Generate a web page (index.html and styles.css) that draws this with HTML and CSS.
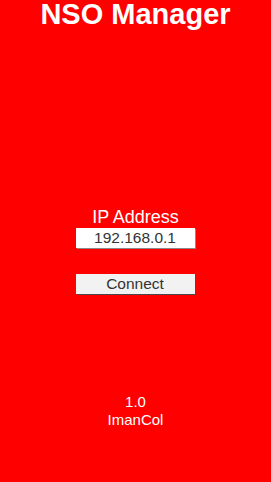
FILE: index.html
```html
<!DOCTYPE html>
<html lang="en">
<head>
    <meta charset="UTF-8">
    <meta name="viewport" content="width=device-width, initial-scale=1.0">
    <title>NSO Manager</title>
    <link rel="stylesheet" href="styles.css">
</head>
<body>
    <h1 class="title">NSO Manager</h1>

    <div class="connect-form">
        <label class="ip-label" for="ipInput">IP Address</label>
        <input class="ip-input" id="ipInput" type="text" value="192.168.0.1">
        <button class="connect-button">Connect</button>
    </div>

    <div class="footer">
        <div>1.0</div>
        <div>ImanCol</div>
    </div>
</body>
</html>
```

FILE: styles.css
```css
body {
    font-family: "Liberation Sans", Arial, sans-serif;
    margin: 0;
    padding: 0;
    background: #ff0000;
    color: #ffffff;
    height: 482px;
    display: flex;
    flex-direction: column;
    align-items: center;
}
.title {
    margin: 0;
    font-size: 29px;
    line-height: 29px;
    font-weight: bold;
}
.connect-form {
    display: flex;
    flex-direction: column;
    align-items: center;
    margin-top: 179px;
}
.ip-label {
    font-size: 18px;
    line-height: 18px;
    margin-bottom: 2px;
}
.ip-input {
    box-sizing: border-box;
    width: 119px;
    height: 20px;
    margin: 0 1px 1px 0;
    padding: 0;
    border: none;
    outline: none;
    background: #ffffff;
    box-shadow: 1px 1px 0 #8a8a8a;
    color: #333333;
    font-family: "Liberation Sans", Arial, sans-serif;
    font-size: 15.5px;
    text-align: center;
}
.connect-button {
    box-sizing: border-box;
    width: 119px;
    height: 20px;
    margin: 25px 1px 1px 0;
    padding: 0;
    border: none;
    background: #f2f2f2;
    box-shadow: 1px 1px 0 #4a4a4a;
    color: #333333;
    font-family: "Liberation Sans", Arial, sans-serif;
    font-size: 15.5px;
    line-height: 20px;
    cursor: pointer;
}
.footer {
    margin-top: 98px;
    font-size: 15px;
    line-height: 18px;
    text-align: center;
}
```
